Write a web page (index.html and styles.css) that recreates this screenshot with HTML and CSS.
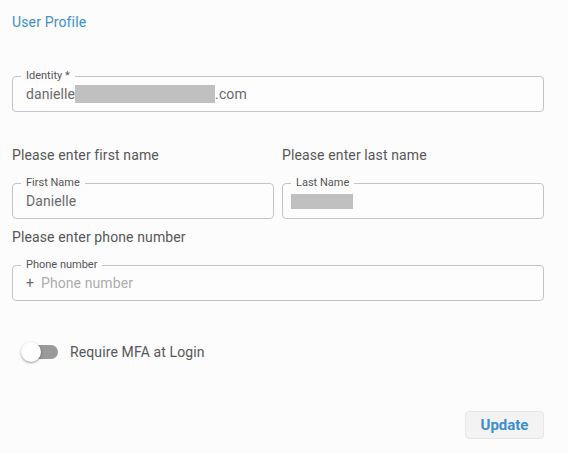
FILE: index.html
```html
<!DOCTYPE html>
<html lang="en">
<head>
<meta charset="utf-8">
<title>User Profile</title>
<link rel="stylesheet" href="styles.css">
</head>
<body>
<main class="page">
  <h1 class="title">User Profile</h1>

  <div class="field field-identity">
    <span class="field-label">Identity *</span>
    <span class="value">danielle</span><span class="redact redact-email"></span><span class="value">.com</span>
  </div>

  <div class="name-grid">
    <div class="col">
      <p class="prompt">Please enter first name</p>
      <div class="field">
        <span class="field-label">First Name</span>
        <span class="value">Danielle</span>
      </div>
    </div>
    <div class="col">
      <p class="prompt">Please enter last name</p>
      <div class="field">
        <span class="field-label">Last Name</span>
        <span class="redact redact-last"></span>
      </div>
    </div>
  </div>

  <p class="prompt prompt-phone">Please enter phone number</p>
  <div class="field field-phone">
    <span class="field-label">Phone number</span>
    <span class="plus">+</span><span class="placeholder">Phone number</span>
  </div>

  <div class="toggle-row">
    <span class="switch">
      <span class="track"></span>
      <span class="thumb"></span>
    </span>
    <span class="toggle-label">Require MFA at Login</span>
  </div>

  <div class="actions">
    <button class="btn" type="button">Update</button>
  </div>
</main>
</body>
</html>
```

FILE: styles.css
```css
html, body {
  margin: 0;
  padding: 0;
  background: #fcfcfc;
}

body {
  font-family: Roboto, "Liberation Sans", Arial, sans-serif;
  color: #555;
}

.page {
  width: 568px;
  height: 453px;
  box-sizing: border-box;
  padding: 12px 24px 0 12px;
}

.title {
  margin: 0;
  font-size: 14px;
  line-height: 20px;
  font-weight: 400;
  letter-spacing: 0.15px;
  color: #3b8fce;
}

.field {
  position: relative;
  height: 36px;
  box-sizing: border-box;
  border: 1px solid #c4c4c4;
  border-radius: 4px;
  background: #fdfdfd;
  display: flex;
  align-items: center;
  padding: 0 13px;
}

.field-label {
  position: absolute;
  top: -7px;
  left: 8px;
  padding: 0 5px;
  background: #fcfcfc;
  font-size: 11px;
  line-height: 12px;
  color: #555;
}

.field-identity {
  margin-top: 44px;
}

.value {
  font-size: 14px;
  line-height: 20px;
  letter-spacing: 0.1px;
  color: #6a6a6a;
}

.redact {
  display: inline-block;
  background: #c0c0c0;
}

.redact-email {
  width: 140px;
  height: 18px;
}

.redact-last {
  width: 62px;
  height: 15px;
  margin-left: -5px;
}

.name-grid {
  margin-top: 33px;
  display: grid;
  grid-template-columns: 1fr 1fr;
  column-gap: 8px;
}

.prompt {
  margin: 0 0 18px;
  font-size: 14px;
  line-height: 20px;
  letter-spacing: 0.12px;
  color: #575757;
}

.prompt-phone {
  margin-top: 8px;
}

.plus {
  font-size: 14px;
  line-height: 20px;
  color: #6a6a6a;
  margin-right: 7px;
}

.placeholder {
  font-size: 14px;
  line-height: 20px;
  letter-spacing: 0.1px;
  color: #acacac;
}

.toggle-row {
  margin-top: 32px;
  display: flex;
  align-items: center;
  height: 38px;
}

.switch {
  position: relative;
  width: 58px;
  height: 38px;
  flex: none;
}

.track {
  position: absolute;
  left: 12px;
  top: 12px;
  width: 34px;
  height: 14px;
  border-radius: 7px;
  background: #9a9a9a;
}

.thumb {
  position: absolute;
  left: 9px;
  top: 9px;
  width: 20px;
  height: 20px;
  border-radius: 50%;
  background: #fff;
  box-shadow: 0 1px 3px rgba(0, 0, 0, 0.3), 0 1px 1px rgba(0, 0, 0, 0.12);
}

.toggle-label {
  font-size: 14px;
  line-height: 20px;
  letter-spacing: 0.12px;
  color: #575757;
}

.actions {
  margin-top: 40px;
  display: flex;
  justify-content: flex-end;
}

.btn {
  width: 79px;
  height: 28px;
  box-sizing: border-box;
  border: 1px solid #e6e6e6;
  border-radius: 4px;
  background: #f3f3f3;
  color: #3b8fce;
  font-family: Roboto, "Liberation Sans", Arial, sans-serif;
  font-size: 15px;
  font-weight: 700;
  padding: 0;
  cursor: pointer;
}
```
